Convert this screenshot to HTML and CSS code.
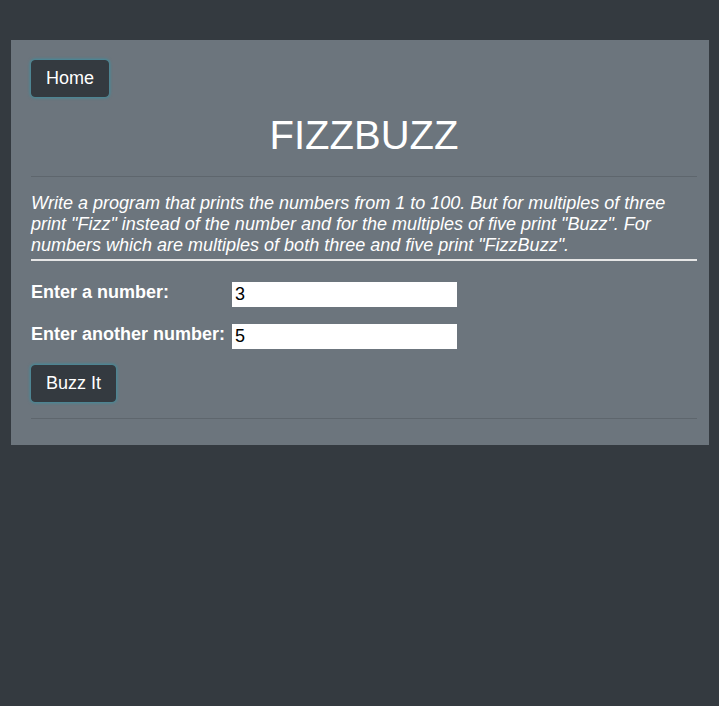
FILE: index.html
```html
<!DOCTYPE html>
<html>
<head>
<meta charset="utf-8">
<link rel="stylesheet" href="styles.css">
</head>
<body>
<div class="page">
  <button class="btn">Home</button>
  <h1 class="title">FIZZBUZZ</h1>
  <hr class="rule">
  <p class="intro">Write a program that prints the numbers from 1 to 100. But for multiples of three print "Fizz" instead of the number and for the multiples of five print "Buzz". For numbers which are multiples of both three and five print "FizzBuzz".</p>
  <form class="form">
    <div class="row">
      <label class="label">Enter a number:</label>
      <input class="field" type="text" value="3">
    </div>
    <div class="row row-last">
      <label class="label">Enter another number:</label>
      <input class="field" type="text" value="5">
    </div>
    <button class="btn" type="button">Buzz It</button>
  </form>
  <hr class="rule rule-bottom">
</div>
</body>
</html>
```
FILE: styles.css
```css
html, body {
  margin: 0;
  padding: 0;
  background: #343a40;
  font-family: "Liberation Sans", Arial, sans-serif;
  color: #fff;
}
.page {
  margin: 40px 10px 0 11px;
  background: #6c757d;
  padding: 20px 12px 26px 20px;
}
.btn {
  display: inline-block;
  font-family: "Liberation Sans", Arial, sans-serif;
  font-size: 18px;
  line-height: 23px;
  padding: 6px 14px;
  color: #fff;
  background: #343a40;
  border: 1px solid #343a40;
  border-radius: 4px;
  box-shadow: 0 0 3px 1px rgba(23, 162, 184, 0.55);
}
.title {
  margin: 14px 0 0;
  font-size: 40px;
  line-height: 48px;
  font-weight: normal;
  text-align: center;
}
.rule {
  margin: 17px 0 16px;
  border: 0;
  border-top: 1px solid rgba(0, 0, 0, 0.12);
}
.intro {
  margin: 0 0 21px;
  font-size: 18px;
  line-height: normal;
  font-style: italic;
  padding-bottom: 3px;
  border-bottom: 2px solid #e6e6e6;
}
.form {
  display: flex;
  flex-direction: column;
  align-items: flex-start;
}
.row {
  display: flex;
  align-items: flex-start;
  margin-bottom: 17px;
}
.row-last {
  margin-bottom: 16px;
}
.label {
  width: 201px;
  font-size: 18px;
  font-weight: bold;
  line-height: 21px;
}
.field {
  width: 225px;
  height: 25px;
  box-sizing: border-box;
  border: 0;
  padding: 0 3px;
  margin: 0;
  font-family: "Liberation Sans", Arial, sans-serif;
  font-size: 18px;
  color: #000;
  background: #fff;
}
.rule-bottom {
  margin: 16px 0 0;
}
```
